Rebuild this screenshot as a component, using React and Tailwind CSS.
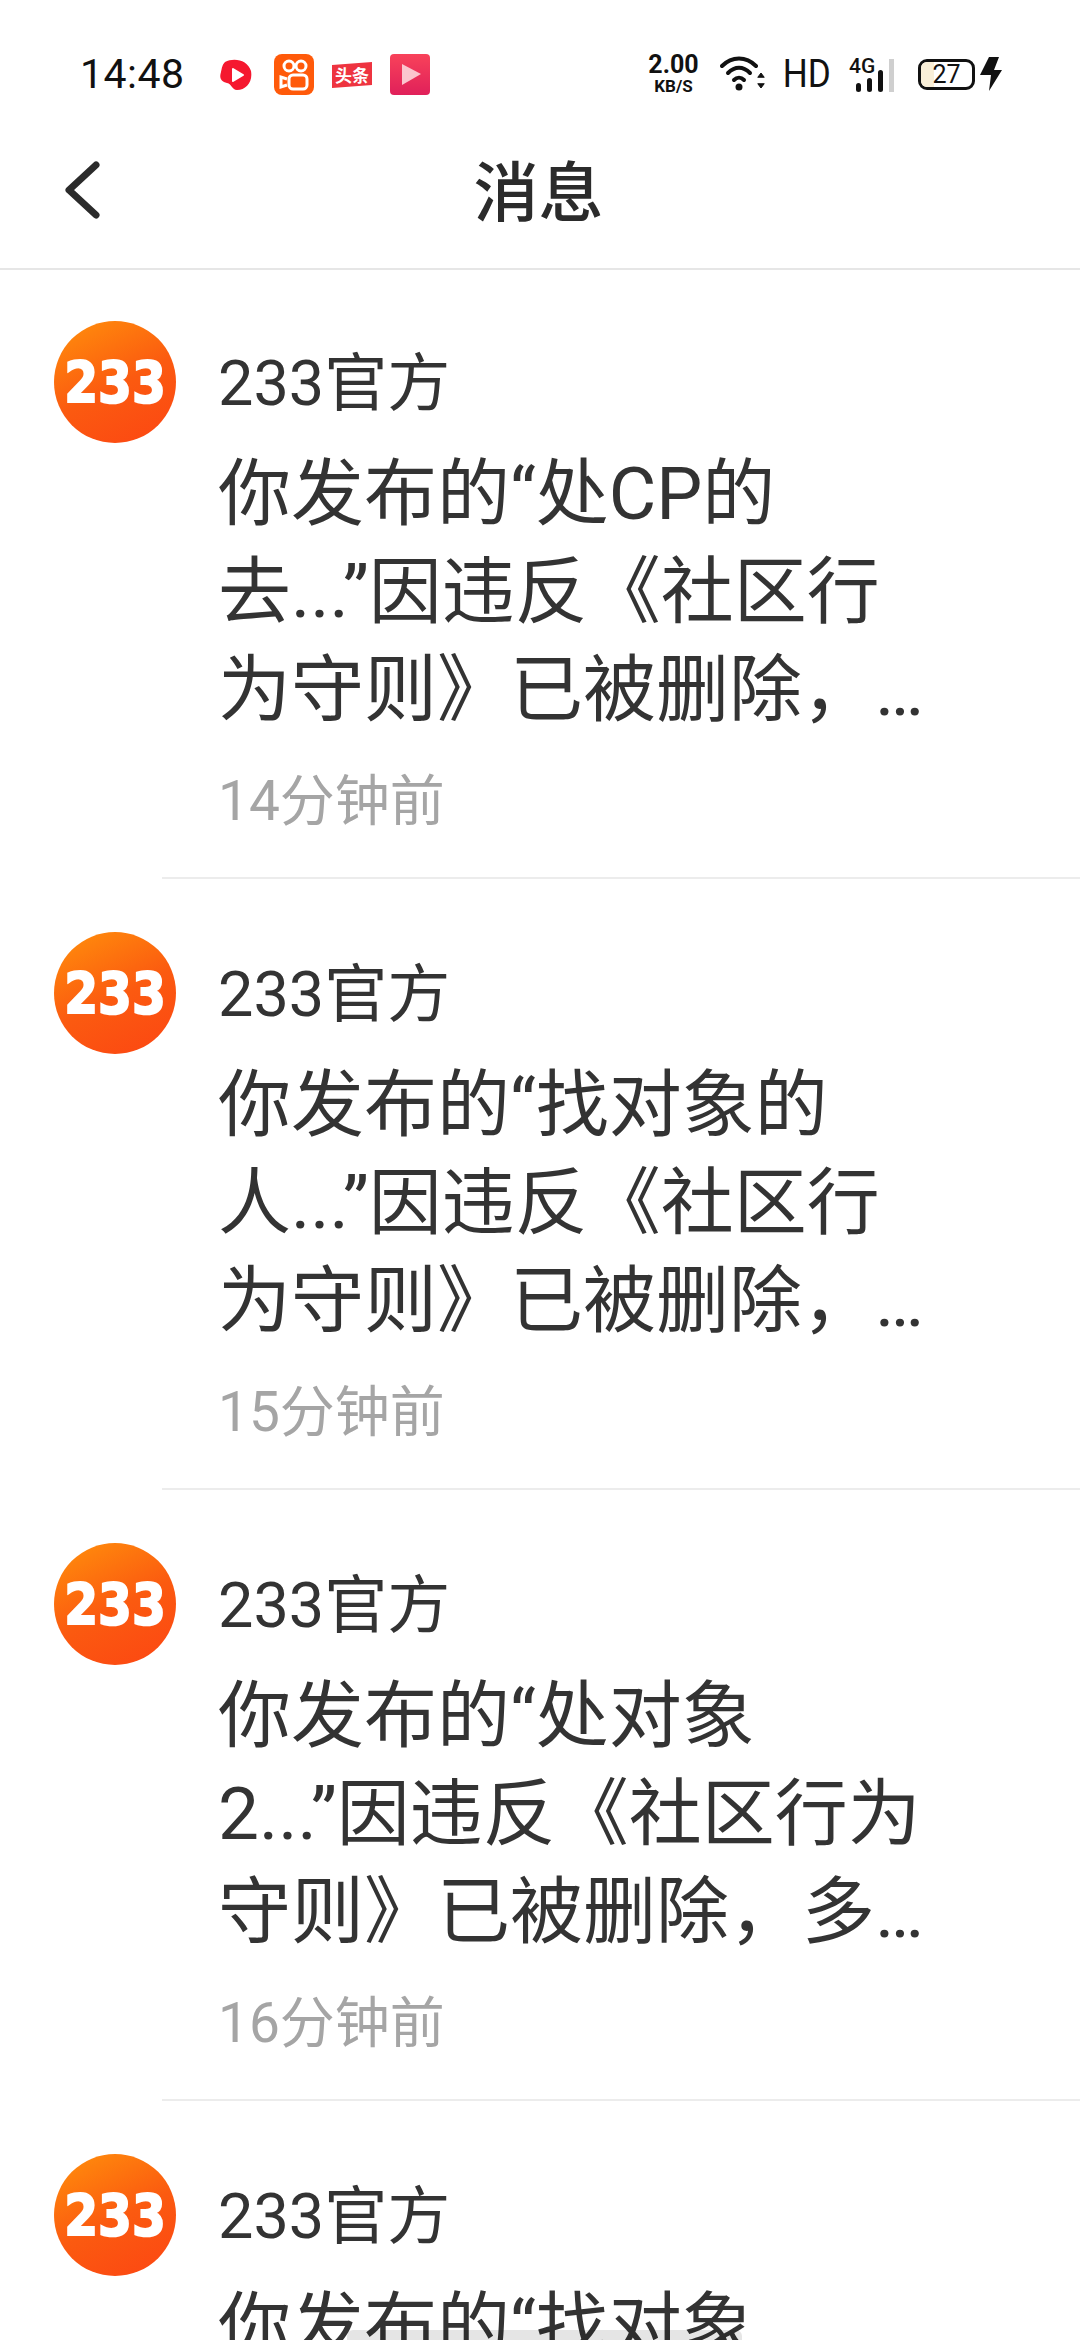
import React from 'react';

const FONT = { fontFamily: 'Roboto, "Noto Sans CJK SC", sans-serif' };

const messages = [
  { id: 1, lines: ['你发布的“处CP的', '去...”因违反《社区行', '为守则》已被删除，…'], time: '14分钟前' },
  { id: 2, lines: ['你发布的“找对象的', '人...”因违反《社区行', '为守则》已被删除，…'], time: '15分钟前' },
  { id: 3, lines: ['你发布的“处对象', '2...”因违反《社区行为', '守则》已被删除，多…'], time: '16分钟前' },
  { id: 4, lines: ['你发布的“找对象'], time: '' },
];

const Avatar = () => (
  <svg width="122" height="122" viewBox="0 0 122 122" className="shrink-0">
    <defs>
      <linearGradient id="logoBg" x1="0.2" y1="0" x2="0.7" y2="1">
        <stop offset="0" stopColor="#ff8a0c" />
        <stop offset="0.55" stopColor="#fb5a10" />
        <stop offset="1" stopColor="#fc4a12" />
      </linearGradient>
    </defs>
    <circle cx="61" cy="61" r="61" fill="url(#logoBg)" />
    <text
      transform="translate(61 82) scale(1.16 1.36)"
      textAnchor="middle"
      fontFamily="DejaVu Sans"
      fontWeight="700"
      fontSize="42"
      fill="#fff"
      stroke="#fff"
      strokeWidth="1.5"
    >
      233
    </text>
  </svg>
);

const AppIcons = () => (
  <div className="flex items-center ml-[35px]">
    <svg width="32" height="32" viewBox="0 0 32 32">
      <path d="M5 3C14-2 28 1 31 12 33 23 26 31 17 31 12 31 12 25 7 24 1 23-1 19 1 13 2 9 2 6 5 3Z" fill="#f5182f" />
      <path d="M13 10L23 16 13 22Z" fill="#fff" strokeLinejoin="round" stroke="#fff" strokeWidth="2" />
    </svg>
    <div className="w-10 h-[41px] ml-[22px] rounded-lg bg-[#ff5a0a] flex items-center justify-center">
      <svg width="30" height="34" viewBox="0 0 30 34" fill="none" stroke="#fff" strokeWidth="3">
        <circle cx="10" cy="8" r="5" />
        <circle cx="22" cy="8" r="5" />
        <rect x="10" y="17" width="18" height="14" rx="4" />
        <path d="M8 21L2 19V29L8 27" />
      </svg>
    </div>
    <svg width="40" height="40" viewBox="0 0 40 40" className="ml-[18px]">
      <path d="M0 10L40 7V30L0 33Z" fill="#ee3440" />
      <text x="20" y="27" textAnchor="middle" fontFamily="Noto Sans CJK SC" fontWeight="700" fontSize="17" fill="#fff">头条</text>
    </svg>
    <svg width="40" height="41" viewBox="0 0 40 41" className="ml-[18px]">
      <defs>
        <linearGradient id="playBg" x1="0" y1="0" x2="0" y2="1">
          <stop offset="0" stopColor="#f8425a" />
          <stop offset="1" stopColor="#e0205a" />
        </linearGradient>
      </defs>
      <rect width="40" height="41" rx="4" fill="url(#playBg)" />
      <path d="M12 10L31 20 12 31Z" fill="#fbc5ce" />
    </svg>
  </div>
);

const StatusBar = () => (
  <div className="h-[100px] shrink-0 flex items-end justify-between pl-[80px] pr-[78px] pb-[5px]">
    <div className="flex items-center">
      <span className="text-[41px] leading-none text-[#111] tracking-[0.5px]" style={FONT}>14:48</span>
      <AppIcons />
    </div>
    <div className="flex items-center text-[#111]">
      <div className="flex flex-col items-center font-bold" style={FONT}>
        <span className="text-[25px] leading-[24px]">2.00</span>
        <span className="text-[17px] leading-[18px]">KB/S</span>
      </div>
      <svg width="46" height="36" viewBox="0 0 46 36" className="ml-[21px]" fill="none" stroke="#111" strokeWidth="4" strokeLinecap="round">
        <path d="M2 10C12 0 26 0 36 10" />
        <path d="M8 17C15 10 23 10 30 17" />
        <path d="M14 24C17 21 21 21 24 24" />
        <circle cx="19" cy="31" r="3.5" fill="#111" stroke="none" />
        <path d="M38 21L41 17 44 21Z" fill="#111" strokeWidth="1" />
        <path d="M38 28L41 32 44 28Z" fill="#111" strokeWidth="1" />
      </svg>
      <span className="ml-[14px] text-[39px] leading-none scale-x-90" style={FONT}>HD</span>
      <div className="relative w-[50px] h-[36px] ml-[16px]">
        <span className="absolute left-0 top-0 text-[21px] leading-none font-medium" style={FONT}>4G</span>
        <div className="absolute bottom-0 left-[7px] flex items-end gap-[6px]">
          <div className="w-[5px] h-[9px] bg-[#111] rounded-sm" />
          <div className="w-[5px] h-[14px] bg-[#111] rounded-sm" />
          <div className="w-[5px] h-[22px] bg-[#111] rounded-sm" />
          <div className="w-[5px] h-[33px] bg-[#cfcfcf]" />
        </div>
      </div>
      <div className="ml-[19px] relative w-[57px] h-[31px] rounded-[9px] border-[3px] border-[#111] overflow-hidden flex items-center justify-center">
        <div className="absolute left-0 top-0 bottom-0 w-[13px] bg-[#f9efd8]" />
        <span className="relative text-[25px] leading-none" style={FONT}>27</span>
      </div>
      <svg width="22" height="34" viewBox="0 0 22 34" className="ml-[5px]">
        <path d="M9 0H19L14 13H22L9 34 11 18H0Z" fill="#111" />
      </svg>
    </div>
  </div>
);

const NavBar = () => (
  <div className="relative h-[170px] shrink-0 flex items-center justify-center border-b-2 border-[#e6e6e6]">
    <button className="absolute left-[64px] top-[61px]">
      <svg width="36" height="58" viewBox="0 0 36 58" fill="none" stroke="#2b2b2b" strokeWidth="7" strokeLinecap="round" strokeLinejoin="round" className="block">
        <path d="M32 4L5 29 32 54" />
      </svg>
    </button>
    <h1 className="text-[65px] leading-none font-medium text-[#2b2b2b] mt-[20px] mr-[3px]" style={FONT}>消息</h1>
  </div>
);

const MessageItem = ({ item }) => (
  <div className="relative h-[611px] pl-[54px] pt-[51px] flex gap-[42px] shrink-0">
    <Avatar />
    <div className="text-[#333]" style={FONT}>
      <div className="text-[63px] leading-[80px] mt-[23px]">233官方</div>
      <div className="mt-[21px] text-[73px] leading-[98px]">
        {item.lines.map((line) => (
          <div key={line} className="whitespace-nowrap">{line}</div>
        ))}
      </div>
      <div className="mt-[27px] text-[55px] leading-[70px] text-[#a5a5a5]">{item.time}</div>
    </div>
    <div className="absolute left-[162px] right-0 bottom-[2px] h-[2px] bg-[#ececec]" />
  </div>
);

const App = () => (
  <div className="relative w-[1080px] h-[2340px] overflow-hidden bg-white flex flex-col" style={FONT}>
    <StatusBar />
    <NavBar />
    <div className="flex flex-col">
      {messages.map((item) => (
        <MessageItem key={item.id} item={item} />
      ))}
    </div>
    <div className="absolute left-[347px] bottom-0 w-[395px] h-[10px] rounded-t-md bg-black/10" />
  </div>
);

export default App;
